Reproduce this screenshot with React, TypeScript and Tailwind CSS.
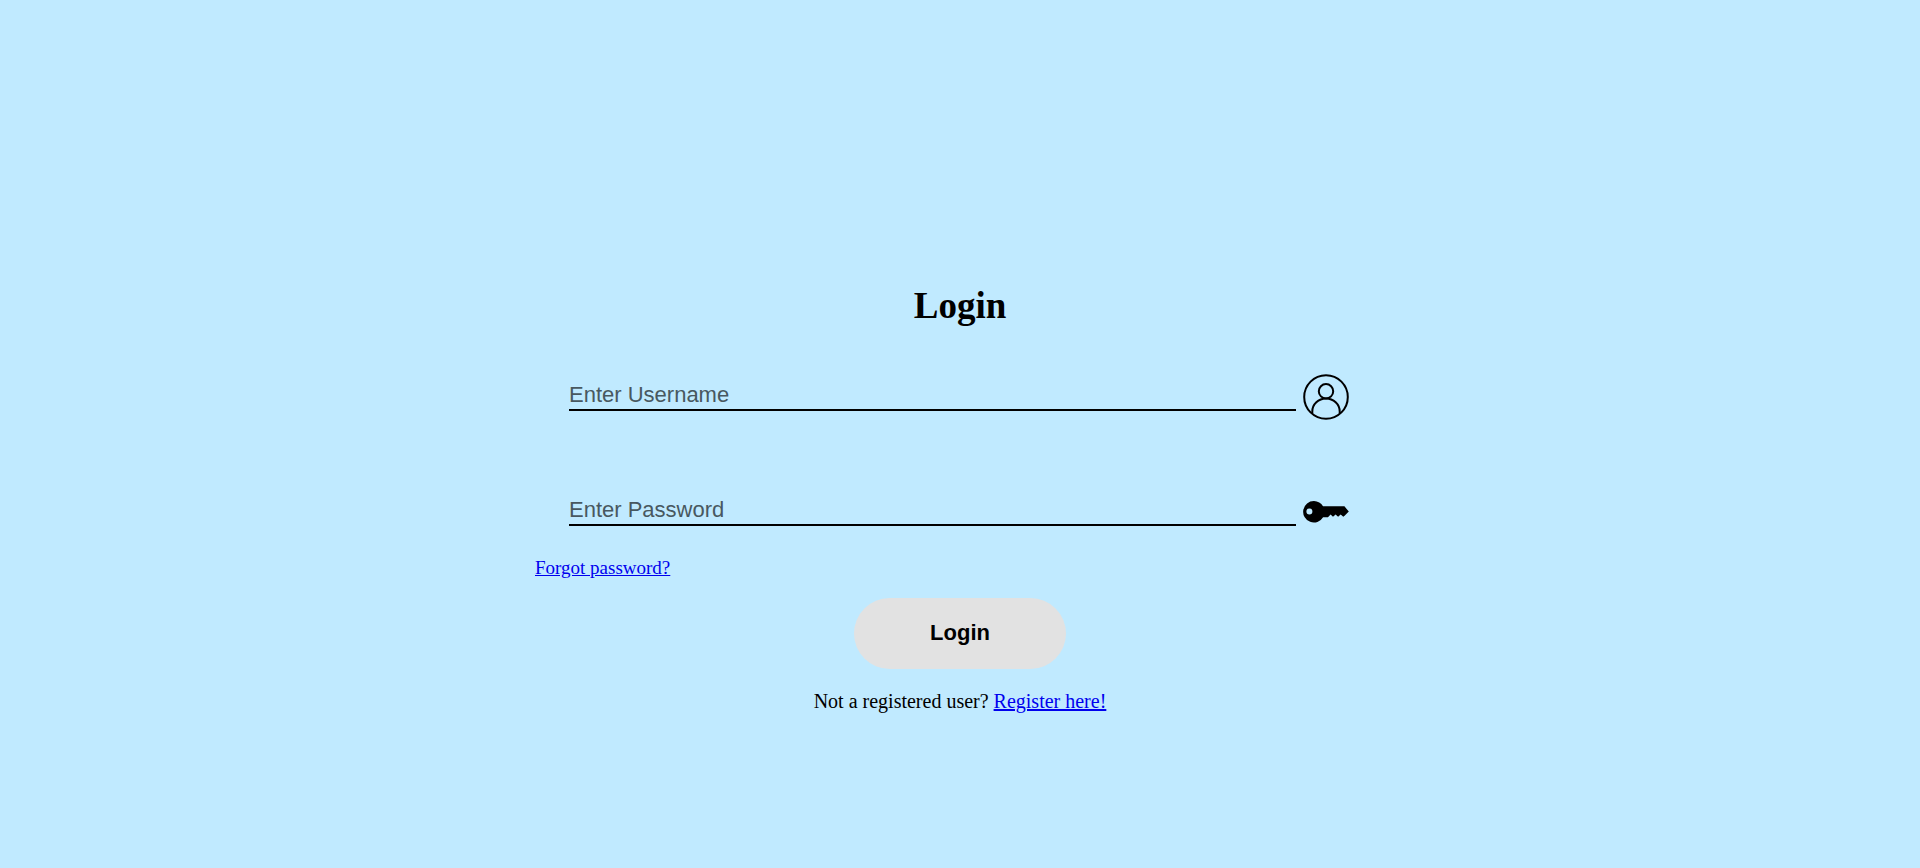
import type { ReactNode } from "react";

function UserIcon() {
  return (
    <svg viewBox="0 0 46 46" className="size-[46px] shrink-0" fill="none" stroke="black" strokeWidth="2" aria-hidden="true">
      <circle cx="23" cy="23" r="21.8" />
      <circle cx="23" cy="17.3" r="7.2" />
      <path d="M9.3 39.8V37.5a13.7 13 0 0 1 27.4 0V39.8" />
    </svg>
  );
}

function KeyIcon() {
  return (
    <svg viewBox="0 0 46 46" className="size-[46px] shrink-0" aria-hidden="true">
      <path
        fillRule="evenodd"
        d="M11 12.1c3.8 0 7.2 2.1 9 5.2h21.4L45.8 22.6 41.6 26.8 40.3 27.8 37.7 25.4 35.1 27.8 32.6 25.4 30 27.8 27.6 25.6 25 28.2H20.1A10.7 10.7 0 1 1 11 12.1ZM6.4 19.6a3 3 0 1 0 0 6 3 3 0 0 0 0-6Z"
      />
    </svg>
  );
}

interface FieldProps {
  id: string;
  label: string;
  type: string;
  icon: ReactNode;
}

function Field({ id, label, type, icon }: FieldProps) {
  return (
    <div className="flex items-center gap-[7px] pr-9 pl-[34px]">
      <input
        id={id}
        type={type}
        aria-label={label}
        placeholder={label}
        className="mb-1 h-8 min-w-0 flex-1 border-b-2 border-black bg-transparent font-['Liberation_Sans',Arial,sans-serif] text-[22px] text-black outline-none placeholder:text-[#485860]"
      />
      <label htmlFor={id}>{icon}</label>
    </div>
  );
}

export default function App() {
  return (
    <main className="flex min-h-screen flex-col items-center justify-center bg-[#c0eaff] px-4 pt-[130px] font-['Liberation_Serif','Times_New_Roman',serif] text-black">
      <form className="flex w-full max-w-[850px] flex-col" onSubmit={(e) => e.preventDefault()}>
        <h1 className="text-center text-[37px] leading-[42px] font-bold">Login</h1>
        <div className="mt-[47px] flex flex-col gap-[69px]">
          <Field id="username" label="Enter Username" type="text" icon={<UserIcon />} />
          <Field id="password" label="Enter Password" type="password" icon={<KeyIcon />} />
        </div>
        <a href="#forgot" className="mt-[22px] self-start text-[19px] leading-[22px] text-[#0000ee] underline">
          Forgot password?
        </a>
        <button
          type="submit"
          className="mt-[19px] h-[71px] w-[212px] self-center rounded-[36px] bg-[#e2e2e2] pb-0.5 font-['Liberation_Sans',Arial,sans-serif] text-[22px] font-bold"
        >
          Login
        </button>
        <p className="mt-5 text-center text-[20px] leading-6">
          Not a registered user?{" "}
          <a href="#register" className="text-[#0000ee] underline decoration-2">
            Register here!
          </a>
        </p>
      </form>
    </main>
  );
}
